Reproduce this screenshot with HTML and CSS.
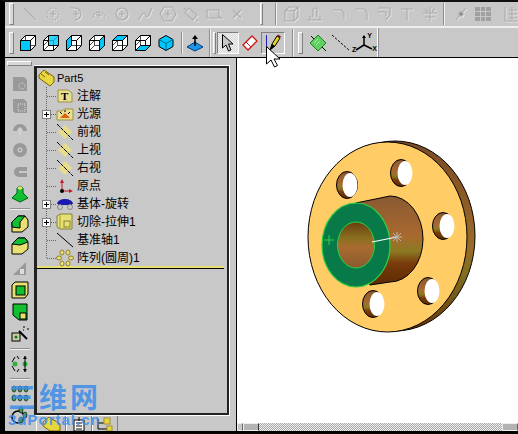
FILE: index.html
```html
<!DOCTYPE html>
<html lang="en">
<head>
  <meta charset="UTF-8">
  <title>Part5</title>
  <link rel="stylesheet" href="styles.css">
</head>
<body>

<svg class="defs" width="0" height="0">
  <defs>
    <symbol id="cube" viewBox="0 0 18 18">
      <path d="M1.5 6.5 6.5 1.5H16.5V11.5L11.5 16.5H1.5Z" fill="#fff" stroke="#000"/>
      <path d="M1.5 6.5H11.5V16.5M11.5 6.5 16.5 1.5" fill="none" stroke="#000"/>
      <path d="M1.5 11.5 6.5 6.5V1.5M6.5 11.5H16.5M6.5 11.5 1.5 16.5M6.5 6.5V11.5" fill="none" stroke="#000" stroke-width=".7"/>
    </symbol>
    <symbol id="treeplane" viewBox="0 0 18 16">
      <path d="M2 8 9 1 16 8 9 15Z" fill="#e6dc8c"/>
      <path d="M1 0 17 16" stroke="#000" stroke-dasharray="4 1"/>
    </symbol>
  </defs>
</svg>

<div class="toolbar toolbar-top">
  <span class="grip"></span>
  <div class="tool dim"><svg width="18" height="18"><path d="M3 3 15 15"/></svg></div>
  <div class="tool dim"><svg width="18" height="18"><circle cx="9" cy="9" r="6" stroke-dasharray="1.5 1.5"/><path d="M9 6v6M6 9h6"/></svg></div>
  <div class="tool dim"><svg width="18" height="18"><path d="M3 3h5a6 6 0 0 1 0 12M9 6v6M6 9h6"/></svg></div>
  <div class="tool dim"><svg width="18" height="18"><path d="M3 13a6 6 0 0 1 12 0" stroke-dasharray="2 1"/><path d="M9 7v6M6 10h6"/></svg></div>
  <div class="tool dim"><svg width="18" height="18"><circle cx="9" cy="9" r="6"/><path d="M9 6v6M6 9h6"/></svg></div>
  <div class="tool dim"><svg width="18" height="18"><path d="M2 15c3-1 3-7 6-7s1 5 4 3 2-6 4-8"/></svg></div>
  <div class="tool dim"><svg width="18" height="18"><path d="M5 2h8l4 7-4 7H5L1 9Z"/><path d="M9 6v6M6 9h6"/></svg></div>
  <div class="tool dim"><svg width="18" height="18"><path d="M7 3 15 10 11 15 3 8Z"/><path d="M2 3 4 5M14 15 16 16"/></svg></div>
  <div class="tool dim"><svg width="18" height="18"><path d="M2 5h12v8H2ZM14 11l3 3"/></svg></div>
  <div class="tool dim"><svg width="18" height="18"><path d="M5 5 13 13M13 5 5 13"/></svg></div>
  <span class="grip grip-thin"></span>
  <span class="sep sep-top"></span>
  <div class="tool dim"><svg width="18" height="18"><path d="M2 6 6 2H15V12L11 16H2ZM2 6H11V16M11 6 15 2"/></svg></div>
  <div class="tool dim"><svg width="18" height="18"><path d="M2 15H16M4 15V11M14 15V11M7 12V5a2 2 0 0 1 4 0v7"/></svg></div>
  <div class="tool dim"><svg width="18" height="18"><path d="M4 5H12L15 8V14"/></svg></div>
  <div class="tool dim"><svg width="18" height="18"><path d="M3 4H12L15 7V15"/></svg></div>
  <div class="tool dim"><svg width="18" height="18"><path d="M3 3H15V10L11 15M3 7H11V11"/></svg></div>
  <div class="tool dim"><svg width="18" height="18"><path d="M3 4H15M9 4V16"/></svg></div>
  <div class="tool dim"><svg width="18" height="18"><path d="M2 8H16M9 2V16M4 4 7 7M14 4 11 7M4 12H14"/></svg></div>
  <span class="sep sep-top2"></span>
  <div class="tool dim"><svg width="18" height="18"><path d="M4 15 14 3"/><circle cx="9" cy="9" r="2" fill="#888"/></svg></div>
  <div class="tool grid-tool"></div>
  <div class="tool dim"><svg width="14" height="18"><path d="M2 2V16H14M6 5H14M6 9H14M6 13H14M9 2V16"/></svg></div>
</div>

<div class="toolbar toolbar-second">
  <span class="grip grip-second"></span>
  <div class="tool"><svg width="18" height="18"><use href="#cube"/><path d="M1.5 6.5H11.5V16.5H1.5Z" fill="#00c8ff" stroke="#000"/></svg></div>
  <div class="tool"><svg width="18" height="18"><use href="#cube"/><path d="M6.5 1.5H16.5V11.5H6.5Z" fill="#00c8ff" fill-opacity=".8" stroke="#000"/></svg></div>
  <div class="tool"><svg width="18" height="18"><use href="#cube"/><path d="M1.5 6.5 6.5 1.5V11.5L1.5 16.5Z" fill="#00c8ff" stroke="#000"/></svg></div>
  <div class="tool"><svg width="18" height="18"><use href="#cube"/><path d="M11.5 6.5 16.5 1.5V11.5L11.5 16.5Z" fill="#00c8ff" stroke="#000"/></svg></div>
  <div class="tool"><svg width="18" height="18"><use href="#cube"/><path d="M1.5 6.5 6.5 1.5H16.5L11.5 6.5Z" fill="#00c8ff" stroke="#000"/></svg></div>
  <div class="tool"><svg width="18" height="18"><use href="#cube"/><path d="M1.5 16.5 6.5 11.5H16.5L11.5 16.5Z" fill="#00c8ff" stroke="#000"/></svg></div>
  <div class="tool"><svg width="18" height="18"><path d="M2 5.5 9 1.5 16 5.5V12.5L9 16.5 2 12.5Z" fill="#00c8ff" stroke="#000"/><path d="M2 5.5 9 9.5 16 5.5M9 9.5V16.5" fill="none" stroke="#006a90"/></svg></div>
  <span class="sep sep-second"></span>
  <div class="tool"><svg width="20" height="20"><path d="M2 14 10 9 18 14 10 18Z" fill="#1e96e6" stroke="#003a80"/><path d="M10 13V3" stroke="#000" stroke-width="1.5"/><path d="M7 6 10 2 13 6Z"/></svg></div>
  <span class="sep sep-second2"></span>
  <span class="grip grip-mid"></span>
  <div class="tool pressed"><svg width="14" height="20"><path d="M1.5 1.5V15L5 12 7.500 18 10 17 7.500 11H12Z" fill="#c8c8c8" stroke="#000"/></svg></div>
  <div class="tool tool-red"><svg width="18" height="18"><path d="M2 11 11 2 16 7 7 16Z" fill="#fff" stroke="#d01818" stroke-width="1.300"/><path d="M5 8 10 13" stroke="#d01818"/></svg></div>
  <div class="tool pressed pressed-pencil"><svg width="16" height="20"><path d="M1.500 2V18" stroke="#2020c0"/><path d="M5 17 7 11 12 3 15 5 10 13Z" fill="#e8d020" stroke="#000"/><path d="M12 3 13 1.500 16 3.500 15 5Z" fill="#701020"/><path d="M5 17 7 11 10 13Z" fill="#000"/></svg></div>
  <span class="sep sep-second3"></span>
  <span class="grip grip-last"></span>
  <div class="tool"><svg width="20" height="20"><path d="M3 3 18 18" stroke="#000"/><path d="M10 2 18 10 10 18 2 10Z" fill="#60d060" stroke="#208020"/><path d="M6 10 10 6M8 12 12 8" stroke="#a8f0a8"/></svg></div>
  <div class="tool"><svg width="20" height="18"><path d="M1 1 19 17" stroke="#000" stroke-dasharray="2.500 1.500"/></svg></div>
  <div class="tool tool-axes"><svg width="24" height="20"><path d="M11 3V12M11 12 3 17M11 12 19 16" stroke="#000" stroke-width="1.500" fill="none"/><path d="M9 5 11 2 13 5Z"/></svg>
    <span class="axis axis-y">Y</span><span class="axis axis-x">X</span><span class="axis axis-z">Z</span>
  </div>
  <span class="toolbar-end"></span>
</div>

<div class="main">
  <div class="sidebar">
    <span class="grip-flat"></span>
    <div class="side-tool side-dim"><svg width="20" height="20"><path d="M3 3H14L17 6V17H3Z" fill="#999"/><circle cx="12" cy="12" r="3" fill="none" stroke="#ddd" stroke-dasharray="1 1"/></svg></div>
    <div class="side-tool side-dim"><svg width="20" height="20"><path d="M3 3H14L17 6V17H5L3 15Z" fill="#999"/><rect x="8" y="8" width="7" height="7" fill="none" stroke="#ddd" stroke-dasharray="1 1"/></svg></div>
    <div class="side-tool side-dim"><svg width="20" height="20"><path d="M3 13A7 7 0 0 1 17 13H13A3 3 0 0 0 7 13Z" fill="#999"/><path d="M10 9V17" stroke="#ddd"/></svg></div>
    <div class="side-tool side-dim"><svg width="20" height="20"><circle cx="10" cy="10" r="7" fill="#999"/><circle cx="10" cy="10" r="2" fill="none" stroke="#ddd"/></svg></div>
    <div class="side-tool side-dim"><svg width="20" height="20"><path d="M17 5H9A5 5 0 0 0 9 15H17V11H9V9H17Z" fill="#999"/></svg></div>
    <div class="side-tool"><svg width="20" height="20"><path d="M2 14 7 9V4L10 2 13 4V9L18 14 10 18Z" fill="#10c030" stroke="#006018"/><path d="M7 4 10 6 13 4 10 2Z" fill="#e8e070"/></svg></div>
    <span class="side-sep"></span>
    <div class="side-tool"><svg width="20" height="20"><path d="M2 8 8 2H15L18 6V13L12 18H2Z" fill="#e8e070" stroke="#000"/><path d="M2 8 8 2H15L10 8V14L2 13Z" fill="#10c030" stroke="#000"/></svg></div>
    <div class="side-tool"><svg width="20" height="20"><path d="M2 8 8 2H15L18 6V13L12 18H2Z" fill="#e8e070" stroke="#000"/><path d="M2 8 8 2H15L18 6 10 9Z" fill="#10c030" stroke="#000"/></svg></div>
    <div class="side-tool side-dim"><svg width="20" height="20"><path d="M3 17 16 4V17Z" fill="#999"/><rect x="10" y="11" width="4" height="5" fill="#ddd"/></svg></div>
    <div class="side-tool"><svg width="20" height="20"><path d="M2 5 5 2H18V14L15 18H2Z" fill="#e8e070" stroke="#000"/><rect x="6" y="6" width="9" height="9" fill="#10c030" stroke="#000"/></svg></div>
    <div class="side-tool"><svg width="20" height="20"><path d="M3 2H17V18H9L3 13Z" fill="#10c030" stroke="#000"/><rect x="10" y="11" width="6" height="6" fill="#e8e070" stroke="#000"/></svg></div>
    <div class="side-tool"><svg width="20" height="20"><rect x="2" y="9" width="8" height="8" fill="#c8d0a0" stroke="#000"/><circle cx="6" cy="13" r="1.500" fill="#107030"/><path d="M9 7 17 15" stroke="#000" stroke-width="2"/><path d="M14 2v2M17 5h2M13 6h1" stroke="#000"/></svg></div>
    <span class="side-sep"></span>
    <div class="side-tool"><svg width="20" height="20"><circle cx="5" cy="10" r="2.500" fill="#30b040"/><circle cx="15" cy="10" r="2.500" fill="#30b040"/><path d="M15 2V18M5 3 2 8M5 17 2 12M7 2 9 5M7 18 9 15" stroke="#000"/><path d="M13 5 15 2 17 5ZM13 15 15 18 17 15Z"/></svg></div>
    <span class="side-sep"></span>
    <div class="side-tool"><svg width="20" height="20"><g fill="#40a050" stroke="#000" stroke-width=".6"><ellipse cx="4" cy="5" rx="2" ry="3"/><ellipse cx="10" cy="5" rx="2" ry="3"/><ellipse cx="16" cy="5" rx="2" ry="3"/><ellipse cx="4" cy="14" rx="2" ry="3"/><ellipse cx="10" cy="14" rx="2" ry="3"/><ellipse cx="16" cy="14" rx="2" ry="3"/></g></svg></div>
    <div class="side-tool"><svg width="20" height="20"><circle cx="8" cy="11" r="6" fill="none" stroke="#000" stroke-width="1.500"/><g fill="#40a050" stroke="#000" stroke-width=".6"><ellipse cx="11" cy="4" rx="2" ry="3"/><ellipse cx="15" cy="9" rx="2" ry="3"/><ellipse cx="11" cy="14" rx="2" ry="3"/></g></svg></div>
    <div class="side-tool"><svg width="20" height="16"><g fill="#40a050" stroke="#000" stroke-width=".6"><ellipse cx="5" cy="5" rx="2" ry="3"/><ellipse cx="13" cy="5" rx="2" ry="3"/></g></svg></div>
  </div>

  <div class="sidepane">
    <div class="tree-frame">
      <div class="tree">
        <div class="tree-root">
          <svg class="tree-icon-root" width="17" height="18"><path d="M1 6 6 1 16 8V13L12 17 1 9Z" fill="#e8d840" stroke="#806000"/><path d="M3 5 7 8M7 3 11 6" stroke="#806000" fill="none"/></svg>
          <span>Part5</span>
        </div>
        <ul class="tree-kids">
          <li><span class="twig"></span><span class="node"><svg width="18" height="16"><path d="M2 2H12L16 5V14H2Z" fill="#e8e090" stroke="#a09040"/><text x="5" y="12" class="note-t">T</text></svg></span><span>注解</span></li>
          <li><b class="plus"></b><span class="twig"></span><span class="node"><svg width="18" height="16"><path d="M1 5H6L8 3H17V14H1Z" fill="#e8e090" stroke="#a09040"/><path d="M4 12H14L9 7Z" fill="#e06010"/><path d="M9 4V6M4 6 6 8M14 6 12 8" stroke="#000"/></svg></span><span>光源</span></li>
          <li><span class="twig"></span><span class="node"><svg width="18" height="16"><use href="#treeplane"/></svg></span><span>前视</span></li>
          <li><span class="twig"></span><span class="node"><svg width="18" height="16"><use href="#treeplane"/></svg></span><span>上视</span></li>
          <li><span class="twig"></span><span class="node"><svg width="18" height="16"><use href="#treeplane"/></svg></span><span>右视</span></li>
          <li><span class="twig"></span><span class="node"><svg width="18" height="16"><path d="M6 14V3M6 13H15" stroke="#c01828" fill="none"/><path d="M4 5 6 1 8 5ZM13 11 17 13 13 15Z" fill="#c01828"/><circle cx="6" cy="13" r="2"/></svg></span><span>原点</span></li>
          <li><b class="plus"></b><span class="twig"></span><span class="node"><svg width="18" height="16"><path d="M1 8A8 5 0 0 1 17 8H1Z" fill="#1818b0"/><path d="M2 8H16" stroke="#1818b0" stroke-width="2"/><circle cx="4" cy="11" r="2.500" fill="none" stroke="#888"/><circle cx="14" cy="11" r="2.500" fill="none" stroke="#888"/></svg></span><span>基体-旋转</span></li>
          <li><b class="plus"></b><span class="twig"></span><span class="node"><svg width="18" height="18"><path d="M1 3 4 1H16V16H4L1 14Z" fill="#e8e070" stroke="#808040"/><path d="M4 1V16" stroke="#a0a040"/><rect x="8" y="8" width="6" height="6" fill="none" stroke="#808040"/></svg></span><span>切除-拉伸1</span></li>
          <li><span class="twig"></span><span class="node"><svg width="18" height="16"><path d="M1 1 17 15" stroke="#000"/></svg></span><span>基准轴1</span></li>
          <li><span class="twig"></span><span class="node"><svg width="18" height="18"><g fill="#e8e070" stroke="#908030"><ellipse cx="6" cy="3.500" rx="2" ry="2.500"/><ellipse cx="12" cy="3.500" rx="2" ry="2.500"/><ellipse cx="3" cy="9" rx="2.500" ry="2"/><ellipse cx="15" cy="9" rx="2.500" ry="2"/><ellipse cx="6" cy="14.500" rx="2" ry="2.500"/><ellipse cx="12" cy="14.500" rx="2" ry="2.500"/></g></svg></span><span>阵列(圆周)1</span></li>
        </ul>
        <div class="rollback"></div>
      </div>
    </div>
    <div class="tabs">
      <div class="tab tab-active"><svg width="22" height="14"><path d="M3 5 9 0 20 7V14H10L3 9Z" fill="#e8d840" stroke="#806000"/></svg></div>
      <div class="tab"><svg width="16" height="14"><path d="M3 3H13V14H3Z" fill="#fff" stroke="#000"/><path d="M5 6H11M5 9H11M5 12H11M8 0V4" stroke="#000"/></svg></div>
      <div class="tab"><svg width="18" height="14"><path d="M2 2V12H12M2 6H8" fill="none" stroke="#000"/><rect x="8" y="1" width="6" height="6" fill="#e8d840" stroke="#a09030"/><rect x="11" y="9" width="5" height="5" fill="#e8d840" stroke="#a09030"/></svg></div>
    </div>
  </div>

  <div class="viewport">
    <svg class="model" viewBox="237 58 281 365">
      <defs>
        <linearGradient id="hubShade" x1="0" y1="0" x2="0" y2="1">
          <stop offset="0" stop-color="#8a5a32"/>
          <stop offset=".45" stop-color="#a9692f"/>
          <stop offset=".62" stop-color="#8c7a22"/>
          <stop offset=".75" stop-color="#7a3c0c"/>
          <stop offset="1" stop-color="#5e2a00"/>
        </linearGradient>
        <linearGradient id="rimShade" x1="0" y1="0" x2="0" y2="1">
          <stop offset="0" stop-color="#7a4a26"/>
          <stop offset=".55" stop-color="#9a6a28"/>
          <stop offset=".7" stop-color="#807020"/>
          <stop offset="1" stop-color="#6a3408"/>
        </linearGradient>
        <linearGradient id="holeShade" x1="0" y1="0" x2="0" y2="1">
          <stop offset="0" stop-color="#6a3a10"/>
          <stop offset=".35" stop-color="#8a7020"/>
          <stop offset=".55" stop-color="#a86c30"/>
          <stop offset="1" stop-color="#8a5a30"/>
        </linearGradient>
      </defs>
      <ellipse cx="395" cy="236" rx="80" ry="95" fill="url(#rimShade)" stroke="#000"/>
      <ellipse cx="387.500" cy="237" rx="79.500" ry="95" fill="#ffcc66" stroke="#000"/>
      <g stroke="#000">
        <ellipse cx="347" cy="185" rx="10.500" ry="13.500" fill="url(#hubShade)"/>
        <ellipse cx="350" cy="185" rx="7.500" ry="12" fill="#fff" stroke="none"/>
        <ellipse cx="401" cy="173" rx="10.500" ry="13.500" fill="url(#hubShade)"/>
        <ellipse cx="405" cy="173" rx="7.500" ry="12" fill="#fff" stroke="none"/>
        <ellipse cx="443" cy="226" rx="10.500" ry="13.500" fill="url(#hubShade)"/>
        <ellipse cx="447" cy="226" rx="7.500" ry="12" fill="#fff" stroke="none"/>
        <ellipse cx="428" cy="291" rx="10.500" ry="13.500" fill="url(#hubShade)"/>
        <ellipse cx="432" cy="291" rx="7.500" ry="12" fill="#fff" stroke="none"/>
        <ellipse cx="373" cy="304" rx="10.500" ry="13.500" fill="url(#hubShade)"/>
        <ellipse cx="377" cy="304" rx="7.500" ry="12" fill="#fff" stroke="none"/>
      </g>
      <path d="M356 203 390 196A33 43 0 0 1 390 282L370 285Z" fill="url(#hubShade)" stroke="#000"/>
      <ellipse cx="356" cy="245" rx="34" ry="42" fill="#087a4a" stroke="#30d040" stroke-width="1.200"/>
      <ellipse cx="356" cy="245" rx="18.500" ry="23" fill="url(#holeShade)" stroke="#30d040"/>
      <path d="M372 242 397 237" stroke="#fff" stroke-width="1.200"/>
      <path d="M392 237H402M397 232V242M393 233 401 241M401 233 393 241" stroke="#b8b8b8"/>
      <path d="M324 240H334M329 235V245" stroke="#30d040"/>
    </svg>
    <div class="hscroll">
      <span class="scroll-btn"></span>
      <span class="scroll-thumb"></span>
      <span class="scroll-track"></span>
      <span class="scroll-btn scroll-btn-end"></span>
    </div>
  </div>
</div>
<div class="bottom-edge"></div>

<svg class="cursor" width="20" height="24"><path d="M1.500 1.500V19L6 15 9.500 22 12.500 20.500 9 14H15Z" fill="#fff" stroke="#000"/></svg>

<div class="watermark">
  <div class="wm-cn">三维网</div>
  <div class="wm-en">3dPortal.cn</div>
</div>

</body>
</html>
```

FILE: styles.css
```css
* {
  box-sizing: border-box;
}

html, body {
  margin: 0;
  height: 434px;
  overflow: hidden;
}

body {
  position: relative;
  display: flex;
  flex-direction: column;
  background: #c8c8c8;
  border-left: 5px solid #000;
  border-top: 2px solid #111;
  font-family: "Liberation Sans", "Noto Sans CJK SC", sans-serif;
  font-size: 12px;
  color: #000;
}

.defs {
  position: absolute;
}

svg {
  display: block;
}

/* toolbars */
.toolbar {
  display: flex;
  align-items: center;
  background: #c8c8c8;
  flex-shrink: 0;
}

.toolbar-top {
  height: 26px;
  padding-left: 4px;
  border-bottom: 2px solid #eee;
}

.toolbar-second {
  height: 30px;
  padding-left: 4px;
  border-bottom: 1px solid #000;
}

.grip {
  width: 5px;
  height: 22px;
  margin-right: 4px;
  border: 1px solid #fff;
  border-right-color: #808080;
  border-bottom-color: #808080;
  background: #d8d8d8;
  flex-shrink: 0;
}

.grip-second {
  margin-right: 2px;
}

.grip-thin {
  width: 3px;
  margin: 0 0 0 12px;
}

.grip-mid {
  width: 3px;
  margin: 0 1px 0 2px;
}

.grip-last {
  margin: 0 3px 0 4px;
}

.tool {
  display: flex;
  align-items: center;
  justify-content: center;
  width: 23px;
  height: 24px;
  flex-shrink: 0;
  position: relative;
}

.dim svg {
  fill: none;
  stroke: #acacac;
  stroke-width: 1.100;
  filter: drop-shadow(1px 1px 0 #e4e4e4);
}

.grid-tool {
  width: 16px;
  height: 14px;
  margin: 0 7px 0 3px;
  background:
    linear-gradient(#c8c8c8 0 0) 0 4px / 100% 1px no-repeat,
    linear-gradient(#c8c8c8 0 0) 0 9px / 100% 1px no-repeat,
    linear-gradient(#c8c8c8 0 0) 5px 0 / 1px 100% no-repeat,
    linear-gradient(#c8c8c8 0 0) 10px 0 / 1px 100% no-repeat,
    #a0a0a0;
}

.sep {
  width: 2px;
  height: 22px;
  flex-shrink: 0;
  border-left: 1px solid #909090;
  border-right: 1px solid #f0f0f0;
}

.sep-top {
  margin: 0 3px 0 12px;
}

.sep-top2 {
  margin: 0 4px 0 2px;
}

.sep-second {
  margin: 0 0 0 4px;
}

.sep-second2 {
  margin-left: 3px;
  height: 28px;
}

.sep-second3 {
  height: 28px;
  margin-left: 7px;
}

.pressed {
  width: 22px;
  height: 22px;
  border: 1px solid #808080;
  border-right-color: #fff;
  border-bottom-color: #fff;
  background: conic-gradient(#d8d8d8 25%, #f0f0f0 0 50%, #d8d8d8 0 75%, #f0f0f0 0) 0 0 / 2px 2px;
}

.tool-red {
  margin-left: -1px;
}

.pressed-pencil {
  width: 24px;
  background: #c8c8c8;
}

.tool-axes {
  width: 25px;
}

.axis {
  position: absolute;
  font: bold 7px "Liberation Sans", sans-serif;
}

.axis-y {
  top: 1px;
  right: 5px;
}

.axis-x {
  bottom: 3px;
  right: 0;
}

.axis-z {
  bottom: 2px;
  left: 0;
}

.toolbar-end {
  width: 2px;
  height: 100%;
  border-left: 1px solid #fff;
  border-right: 1px solid #909090;
}

/* main area */
.main {
  display: flex;
  flex: 1;
  min-height: 0;
}

.sidebar {
  width: 29px;
  display: flex;
  flex-direction: column;
  align-items: center;
  flex-shrink: 0;
  overflow: hidden;
}

.grip-flat {
  width: 25px;
  height: 5px;
  margin: 3px 0 7px;
  border: 1px solid #fff;
  border-right-color: #808080;
  border-bottom-color: #808080;
  background: #d8d8d8;
  flex-shrink: 0;
}

.side-tool {
  height: 22px;
  display: flex;
  align-items: center;
  justify-content: center;
  flex-shrink: 0;
}

.side-sep {
  width: 20px;
  height: 2px;
  margin: 3px 0;
  border-top: 1px solid #909090;
  border-bottom: 1px solid #f0f0f0;
  flex-shrink: 0;
}

.sidepane {
  width: 202px;
  padding-top: 7px;
  display: flex;
  flex-direction: column;
  flex-shrink: 0;
}

.tree-frame {
  margin-right: 6px;
  height: 351px;
  border: 1px solid #fff;
  border-left: 0;
  flex-shrink: 0;
}

.tree {
  height: 100%;
  padding-top: 1px;
  border: 2px solid #222;
  border-left-width: 3px;
}

.tree-root {
  display: flex;
  align-items: center;
  height: 18px;
  padding-left: 1px;
  gap: 2px;
  font-size: 11px;
}

.tree-kids {
  list-style: none;
  margin: 0 0 8px 9px;
  padding: 0;
  border-left: 1px dotted #666;
  height: 171px;
}

.tree-kids li {
  position: relative;
  display: flex;
  align-items: center;
  height: 18px;
  white-space: nowrap;
  line-height: 18px;
}

.twig {
  width: 9px;
  border-top: 1px dotted #666;
}

.node {
  width: 18px;
  margin-right: 3px;
  display: flex;
  justify-content: center;
}

.note-t {
  font: bold 11px "Liberation Serif", serif;
}

.plus {
  position: absolute;
  left: -5px;
  top: 5px;
  width: 9px;
  height: 9px;
  border: 1px solid #808080;
  background:
    linear-gradient(#000 0 0) center / 5px 1px no-repeat,
    linear-gradient(#000 0 0) center / 1px 5px no-repeat,
    #fff;
}

.rollback {
  height: 3px;
  margin-right: 3px;
  border-top: 2px solid #e8e070;
  border-bottom: 1px solid #000;
}

.tabs {
  display: flex;
  height: 15px;
  padding-left: 2px;
  overflow: hidden;
}

.tab {
  width: 26px;
  display: flex;
  justify-content: center;
  align-items: flex-end;
  border-right: 1px solid #808080;
  border-left: 1px solid #fff;
}

.tab-active {
  width: 30px;
}

.viewport {
  flex: 1;
  min-width: 0;
  display: flex;
  flex-direction: column;
  background: #fff;
  border-left: 1px solid #000;
}

.model {
  width: 281px;
  height: 365px;
  flex-shrink: 0;
}

.hscroll {
  display: flex;
  height: 8px;
}

.scroll-btn {
  width: 6px;
  background: #c8c8c8;
  border: 1px solid #eee;
  border-right-color: #666;
}

.scroll-thumb {
  width: 16px;
  background: #b4b4b4;
  border: 1px solid #eee;
  border-right-color: #333;
}

.scroll-track {
  flex: 1;
  background: conic-gradient(#aaa 25%, #eee 0 50%, #aaa 0 75%, #eee 0) 0 0 / 2px 2px;
}

.scroll-btn-end {
  width: 16px;
  background: #b4b4b4;
}

.bottom-edge {
  height: 3px;
  margin-left: -5px;
  background: #000;
  flex-shrink: 0;
}

/* overlays */
.cursor {
  position: absolute;
  left: 260px;
  top: 43px;
}

.watermark {
  position: absolute;
  left: 3px;
  top: 381px;
  color: rgba(60, 140, 235, 0.85);
}

.wm-cn {
  font: bold 28px/27px "Noto Sans CJK SC", sans-serif;
  letter-spacing: 3px;
}

.wm-en {
  font: bold 15px/15px "Liberation Sans", sans-serif;
  letter-spacing: 1px;
  margin-top: 2px;
}
```
